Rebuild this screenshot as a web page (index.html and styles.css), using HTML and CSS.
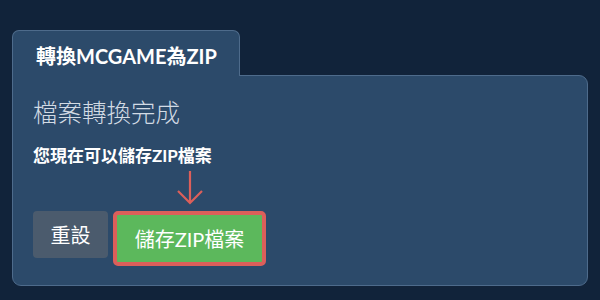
FILE: index.html
```html
<!DOCTYPE html>
<html lang="zh-Hant">
<head>
    <meta charset="UTF-8">
    <meta name="viewport" content="width=device-width, initial-scale=1.0">
    <title>轉換MCGAME為ZIP</title>
    <link rel="stylesheet" href="styles.css">
</head>
<body>

    <div class="converter">
        <div class="tab">轉換MCGAME為ZIP</div>

        <div class="panel">
            <h2 class="status">檔案轉換完成</h2>
            <div class="hint">您現在可以儲存ZIP檔案</div>

            <div class="arrow">
                <svg width="30" height="38" viewBox="0 0 30 38">
                    <path d="M15 2 V34 M3 22 L15 34 L27 22" fill="none" stroke="#dc5f5a" stroke-width="2.2"/>
                </svg>
            </div>

            <div class="actions">
                <button class="btn btn-reset">重設</button>
                <button class="btn btn-save">儲存ZIP檔案</button>
            </div>
        </div>
    </div>

</body>
</html>
```

FILE: styles.css
```css
body {
    font-family: 'Lato', 'Noto Sans CJK TC', sans-serif;
    background-color: #11233a;
    margin: 0;
    color: #fff;
}

.converter {
    padding: 30px 12px 0 12px;
}

.tab {
    display: inline-block;
    position: relative;
    z-index: 1;
    background-color: #2c4a6a;
    border: 1px solid #4e6b8b;
    border-bottom: none;
    border-radius: 7px 7px 0 0;
    padding: 14px 22px 9px 23px;
    margin-bottom: -1px;
    font-size: 20px;
    font-weight: bold;
    line-height: 22px;
}

.panel {
    background-color: #2c4a6a;
    border: 1px solid #4e6b8b;
    border-radius: 0 9px 9px 9px;
    padding: 21px 20px 19px 20px;
}

.status {
    margin: 0;
    font-size: 24.5px;
    font-weight: 300;
    line-height: 31px;
    color: #d3dbe4;
}

.hint {
    margin-top: 17px;
    font-size: 17px;
    font-weight: bold;
    line-height: 22px;
}

.arrow {
    padding-left: 142px;
    height: 42px;
    margin-top: 2px;
}

.arrow svg {
    display: block;
}

.actions {
    display: flex;
    align-items: flex-start;
    gap: 5px;
}

.btn {
    font-family: inherit;
    font-size: 20px;
    line-height: 24px;
    color: #fff;
    border: none;
    cursor: pointer;
}

.btn-reset {
    width: 75px;
    height: 47px;
    background-color: #4b5b6d;
    border-radius: 4px;
}

.btn-save {
    width: 153px;
    height: 55px;
    background-color: #5cb85c;
    border: 4px solid #dc5f5a;
    border-radius: 5px;
}
```
